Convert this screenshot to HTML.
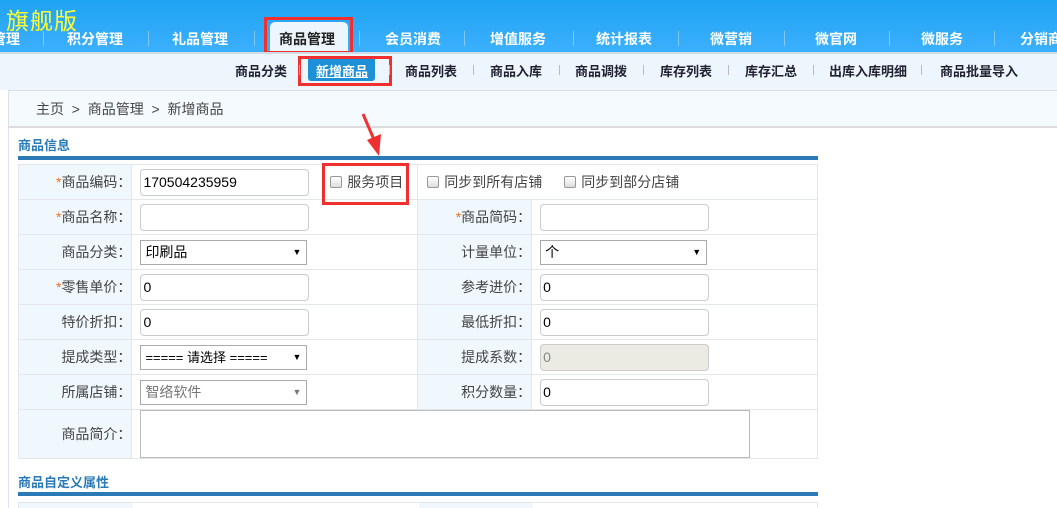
<!DOCTYPE html>
<html><head><meta charset="utf-8"><style>
*{margin:0;padding:0;box-sizing:border-box}
body{width:1057px;height:508px;overflow:hidden;background:#fff;font-family:"Liberation Sans","Noto Sans CJK SC",sans-serif;position:relative;font-size:13px;color:#333}
.a{position:absolute}
.top{left:0;top:0;width:1057px;height:52px;background:linear-gradient(#1ea3f2,#3cb0fd)}
.logo{left:6px;top:2px;font-size:23px;color:#ffff33;letter-spacing:1px}
.nav{top:29px;font-size:14px;font-weight:bold;color:#fff;white-space:nowrap}
.sep{top:31px;width:1px;height:15px;background:#7fcaf7}
.tab{left:270px;top:22px;width:78px;height:30px;background:#eef6fd;border-radius:5px 5px 0 0}
.sub{left:0;top:52px;width:1057px;height:38px;background:#eef6fd;border-top:2px solid #d0dde8}
.si{top:61px;font-size:13px;font-weight:bold;color:#223;white-space:nowrap}
.ss{top:65px;width:1px;height:10px;background:#bbb}
.red{border:3px solid #f0302f}
.crumb{left:8px;top:90px;width:1049px;height:38px;background:#f5faff;border-top:1px solid #dde;border-bottom:2px solid #dcdcdc;border-left:1px solid #dde}
.lpan{left:8px;top:128px;width:1px;height:380px;background:#dde6ee}
.ttl{left:18px;font-size:13px;font-weight:bold;color:#2a7ab8}
.bar{left:18px;width:800px;height:4px;background:#2a7ab8}
table{position:absolute;left:18px;top:164px;width:800px;border-collapse:collapse}
td{border:1px solid #e2e6ea;height:35px;font-size:14px;color:#444}
td.l{background:#f0f7fd;text-align:right;padding-right:0;width:114px}
td.v{width:286px;background:#fff;padding-left:8px}
.s{color:#f07020}
.in{display:inline-block;width:169px;height:27px;border:1px solid #ccc;border-radius:4px;background:#fff;font-size:14px;line-height:25px;padding-left:2px;color:#000;vertical-align:middle}
.sel{display:inline-block;width:167px;height:25px;border:1px solid #aaa;background:#fff;font-size:14px;line-height:23px;padding-left:4px;color:#000;position:relative;vertical-align:middle}
.sel:after{content:"▼";position:absolute;right:5px;top:0;font-size:9px}
.cb{display:inline-block;width:12px;height:12px;border:1px solid #999;border-radius:2px;background:linear-gradient(#fff,#ddd);vertical-align:-1px;margin-right:5px}
</style></head><body>
<div class="a top"></div>
<div class="a logo">旗舰版</div>
<div class="a tab"></div>
<div class="a red" style="left:264px;top:17px;width:89px;height:37px"></div>
<div class="a nav" style="left:-8px">管理</div>
<div class="a nav" style="left:67px">积分管理</div>
<div class="a nav" style="left:172px">礼品管理</div>
<div class="a nav" style="left:279px;color:#222">商品管理</div>
<div class="a nav" style="left:385px">会员消费</div>
<div class="a nav" style="left:490px">增值服务</div>
<div class="a nav" style="left:596px">统计报表</div>
<div class="a nav" style="left:710px">微营销</div>
<div class="a nav" style="left:815px">微官网</div>
<div class="a nav" style="left:921px">微服务</div>
<div class="a nav" style="left:1020px">分销商</div>
<div class="a sep" style="left:43px"></div><div class="a sep" style="left:148px"></div><div class="a sep" style="left:254px"></div><div class="a sep" style="left:359px"></div><div class="a sep" style="left:464px"></div><div class="a sep" style="left:573px"></div><div class="a sep" style="left:678px"></div><div class="a sep" style="left:784px"></div><div class="a sep" style="left:889px"></div><div class="a sep" style="left:994px"></div>
<div class="a sub"></div>
<div class="a" style="left:308px;top:57px;width:67px;height:24px;background:#1e90d8;border-radius:3px"></div>
<div class="a red" style="left:298px;top:56px;width:94px;height:30px"></div>
<div class="a si" style="left:235px">商品分类</div>
<div class="a si" style="left:316px;color:#fff;text-decoration:underline">新增商品</div>
<div class="a si" style="left:405px">商品列表</div>
<div class="a si" style="left:490px">商品入库</div>
<div class="a si" style="left:575px">商品调拨</div>
<div class="a si" style="left:660px">库存列表</div>
<div class="a si" style="left:745px">库存汇总</div>
<div class="a si" style="left:829px">出库入库明细</div>
<div class="a si" style="left:940px">商品批量导入</div>
<div class="a ss" style="left:299px"></div><div class="a ss" style="left:389px"></div><div class="a ss" style="left:473px"></div><div class="a ss" style="left:559px"></div><div class="a ss" style="left:643px"></div><div class="a ss" style="left:728px"></div><div class="a ss" style="left:813px"></div><div class="a ss" style="left:921px"></div>
<div class="a crumb"></div>
<div class="a" style="left:36px;top:99px;font-size:14px;color:#444">主页 &nbsp;&gt;&nbsp; 商品管理 &nbsp;&gt;&nbsp; 新增商品</div>
<div class="a lpan"></div>
<div class="a ttl" style="top:135px">商品信息</div>
<div class="a bar" style="top:156px"></div>
<table>
<tr><td class="l"><span class="s">*</span>商品编码：</td><td class="v"><span class="in">170504235959</span></td><td colspan="2" style="padding-left:0;background:#fff"><span style="margin-left:-88px;display:inline-block"><span class="cb"></span>服务项目</span><span style="margin-left:24px"><span class="cb"></span>同步到所有店铺</span><span style="margin-left:22px"><span class="cb"></span>同步到部分店铺</span></td></tr>
<tr><td class="l"><span class="s">*</span>商品名称：</td><td class="v"><span class="in"></span></td><td class="l"><span class="s">*</span>商品简码：</td><td class="v"><span class="in"></span></td></tr>
<tr><td class="l">商品分类：</td><td class="v"><span class="sel">印刷品</span></td><td class="l">计量单位：</td><td class="v"><span class="sel">个</span></td></tr>
<tr><td class="l"><span class="s">*</span>零售单价：</td><td class="v"><span class="in">0</span></td><td class="l">参考进价：</td><td class="v"><span class="in">0</span></td></tr>
<tr><td class="l">特价折扣：</td><td class="v"><span class="in">0</span></td><td class="l">最低折扣：</td><td class="v"><span class="in">0</span></td></tr>
<tr><td class="l">提成类型：</td><td class="v"><span class="sel" style="font-size:13px">===== 请选择 =====</span></td><td class="l">提成系数：</td><td class="v"><span class="in" style="background:#ebebe4;color:#888">0</span></td></tr>
<tr><td class="l">所属店铺：</td><td class="v"><span class="sel" style="color:#777">智络软件</span></td><td class="l">积分数量：</td><td class="v"><span class="in">0</span></td></tr>
<tr><td class="l" style="height:48px">商品简介：</td><td colspan="3" style="padding-left:8px;background:#fff"><span style="display:inline-block;width:610px;height:48px;border:1px solid #bbb;vertical-align:middle"></span></td></tr>
</table>
<div class="a red" style="left:322px;top:163px;width:87px;height:42px"></div>
<svg class="a" style="left:355px;top:110px" width="30" height="50"><line x1="8" y1="4" x2="20" y2="32" stroke="#f03030" stroke-width="3"/><polygon points="12,30 26,24 24,46" fill="#f03030"/></svg>
<div class="a ttl" style="top:472px">商品自定义属性</div>
<div class="a bar" style="top:492px"></div>
<div class="a" style="left:18px;top:502px;width:800px;height:6px;border:1px solid #e2e6ea;border-bottom:none;background:linear-gradient(90deg,#f0f7fd 114px,#fff 114px,#fff 400px,#f0f7fd 400px,#f0f7fd 514px,#fff 514px)"></div>
</body></html>
